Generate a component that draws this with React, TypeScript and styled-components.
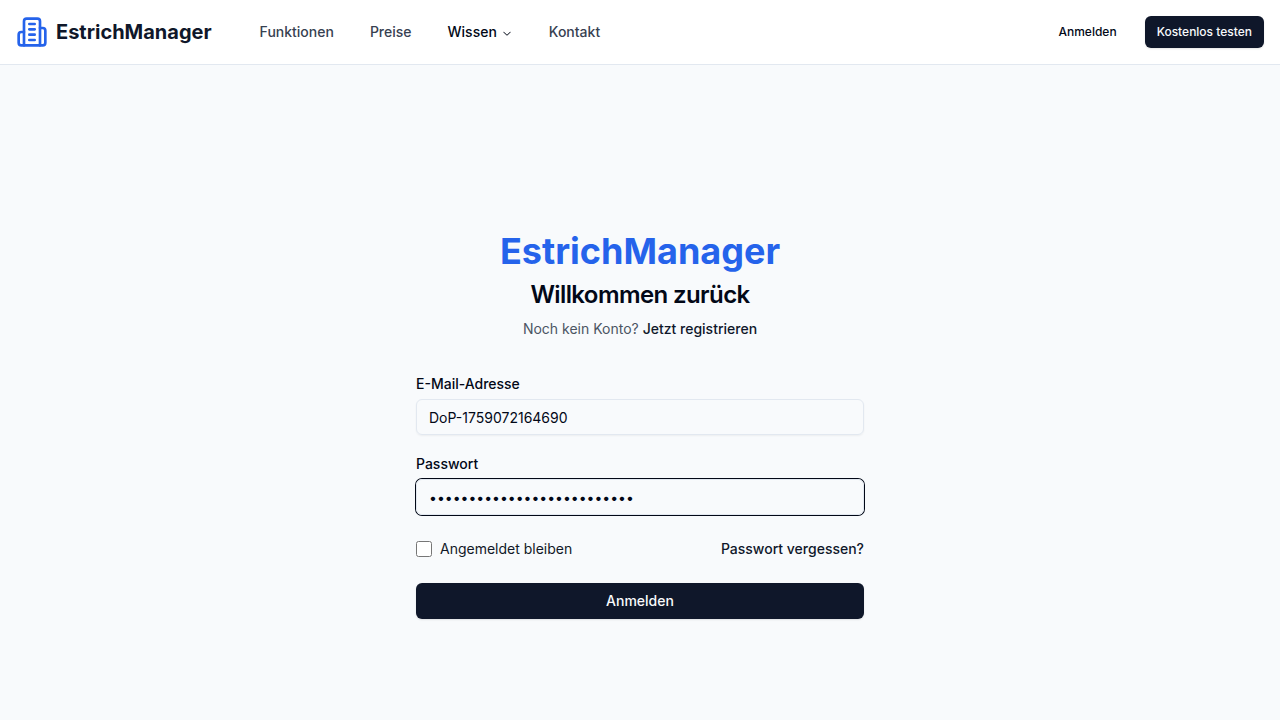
import React from 'react';
import styled, { createGlobalStyle, css } from 'styled-components';

const GlobalStyle = createGlobalStyle`
  *, *::before, *::after { box-sizing: border-box; }
  body {
    margin: 0;
    background: #f8fafc;
    color: #020817;
    font-family: Inter, "Liberation Sans", sans-serif;
    font-size: 16px;
    line-height: 24px;
    -webkit-font-smoothing: antialiased;
  }
  a { color: inherit; text-decoration: none; }
  button, input { font: inherit; color: inherit; }
  h1, h2, p { margin: 0; }
`;

const Page = styled.div`
  display: flex;
  flex-direction: column;
  min-height: 100vh;
`;

const Header = styled.header`
  background: #ffffff;
  border-bottom: 1px solid #e2e8f0;
`;

const HeaderInner = styled.div`
  display: flex;
  align-items: center;
  justify-content: space-between;
  max-width: 1400px;
  height: 64px;
  margin: 0 auto;
  padding: 0 16px;
`;

const HeaderLeft = styled.div`
  display: flex;
  align-items: center;
  gap: 32px;
`;

const Logo = styled.a`
  display: flex;
  align-items: center;
  gap: 8px;
  color: #0f172a;
  font-size: 20px;
  font-weight: 700;
  line-height: 28px;

  svg { color: #2563eb; }
`;

const Nav = styled.nav`
  display: flex;
  align-items: center;
  gap: 4px;
`;

const navItem = css`
  display: inline-flex;
  align-items: center;
  gap: 4px;
  height: 36px;
  padding: 0 16px;
  border: 0;
  border-radius: 6px;
  background: transparent;
  font-size: 14px;
  font-weight: 500;
  line-height: 20px;
`;

const NavLink = styled.a`
  ${navItem}
  color: #374151;
`;

const NavTrigger = styled.button`
  ${navItem}
  color: #020817;
  cursor: pointer;

  svg { margin-top: 2px; }
`;

const HeaderActions = styled.div`
  display: flex;
  align-items: center;
  gap: 16px;
`;

const ActionLink = styled.a<{ $filled?: boolean }>`
  display: inline-flex;
  align-items: center;
  justify-content: center;
  height: 32px;
  padding: 0 12px;
  border-radius: 6px;
  font-size: 12px;
  font-weight: 500;
  line-height: 16px;
  ${({ $filled }) =>
    $filled &&
    css`
      background: #0f172a;
      color: #f8fafc;
      box-shadow: 0 1px 2px rgba(0, 0, 0, 0.1);
    `}
`;

const Main = styled.main`
  display: flex;
  flex: 1;
  align-items: center;
  justify-content: center;
  padding: 113px 16px 48px;
`;

const Panel = styled.div`
  display: flex;
  flex-direction: column;
  gap: 32px;
  width: 100%;
  max-width: 448px;
`;

const Intro = styled.div`
  display: flex;
  flex-direction: column;
  gap: 8px;
  text-align: center;
`;

const Brand = styled.h1`
  color: #2563eb;
  font-size: 36px;
  font-weight: 700;
  line-height: 40px;
`;

const Welcome = styled.h2`
  font-size: 24px;
  font-weight: 600;
  line-height: 32px;
  letter-spacing: -0.025em;
`;

const Hint = styled.p`
  color: #4b5563;
  font-size: 14px;
  line-height: 20px;
`;

const TextLink = styled.a`
  color: #0f172a;
  font-size: 14px;
  font-weight: 500;
  line-height: 20px;
`;

const Form = styled.form`
  display: flex;
  flex-direction: column;
  gap: 24px;
`;

const Fields = styled.div`
  display: flex;
  flex-direction: column;
  gap: 16px;
`;

const Field = styled.div`
  display: flex;
  flex-direction: column;
  gap: 2px;
`;

const Label = styled.label`
  font-size: 14px;
  font-weight: 500;
  line-height: 26px;
`;

const Input = styled.input`
  width: 100%;
  height: 36px;
  padding: 4px 12px;
  border: 1px solid #e2e8f0;
  border-radius: 6px;
  outline: none;
  background: transparent;
  box-shadow: 0 1px 2px rgba(0, 0, 0, 0.05);
  font-size: 14px;
  line-height: 20px;

  &:focus { box-shadow: 0 0 0 1px #020817; }
`;

const Options = styled.div`
  display: flex;
  align-items: center;
  justify-content: space-between;
`;

const Remember = styled.label`
  display: flex;
  align-items: center;
  gap: 8px;
  color: #111827;
  font-size: 14px;
  line-height: 20px;
`;

const Checkbox = styled.input`
  width: 16px;
  height: 16px;
  margin: 0;
`;

const Submit = styled.button`
  height: 36px;
  border: 0;
  border-radius: 6px;
  background: #0f172a;
  color: #f8fafc;
  box-shadow: 0 1px 2px rgba(0, 0, 0, 0.1);
  font-size: 14px;
  font-weight: 500;
  line-height: 20px;
  cursor: pointer;
`;

const BuildingIcon = () => (
  <svg width="32" height="32" viewBox="0 0 24 24" fill="none" stroke="currentColor" strokeWidth="2" strokeLinecap="round" strokeLinejoin="round" aria-hidden="true">
    <path d="M6 22V4a2 2 0 0 1 2-2h8a2 2 0 0 1 2 2v18Z" />
    <path d="M6 12H4a2 2 0 0 0-2 2v6a2 2 0 0 0 2 2h2" />
    <path d="M18 9h2a2 2 0 0 1 2 2v9a2 2 0 0 1-2 2h-2" />
    <path d="M10 6h4" />
    <path d="M10 10h4" />
    <path d="M10 14h4" />
    <path d="M10 18h4" />
  </svg>
);

const ChevronIcon = () => (
  <svg width="12" height="12" viewBox="0 0 15 15" fill="none" aria-hidden="true">
    <path
      d="M3.13523 6.15803C3.3241 5.95657 3.64052 5.94637 3.84197 6.13523L7.5 9.56464L11.158 6.13523C11.3595 5.94637 11.6759 5.95657 11.8648 6.15803C12.0536 6.35949 12.0434 6.67591 11.842 6.86477L7.84197 10.6148C7.64964 10.7951 7.35036 10.7951 7.15803 10.6148L3.15803 6.86477C2.95657 6.67591 2.94637 6.35949 3.13523 6.15803Z"
      fill="currentColor"
      fillRule="evenodd"
      clipRule="evenodd"
    />
  </svg>
);

export default function App() {
  return (
    <Page>
      <GlobalStyle />
      <Header>
        <HeaderInner>
          <HeaderLeft>
            <Logo href="#">
              <BuildingIcon />
              EstrichManager
            </Logo>
            <Nav>
              <NavLink href="#funktionen">Funktionen</NavLink>
              <NavLink href="#preise">Preise</NavLink>
              <NavTrigger type="button" aria-expanded="false">
                Wissen
                <ChevronIcon />
              </NavTrigger>
              <NavLink href="#kontakt">Kontakt</NavLink>
            </Nav>
          </HeaderLeft>
          <HeaderActions>
            <ActionLink href="#anmelden">Anmelden</ActionLink>
            <ActionLink href="#testen" $filled>Kostenlos testen</ActionLink>
          </HeaderActions>
        </HeaderInner>
      </Header>
      <Main>
        <Panel>
          <Intro>
            <Brand>EstrichManager</Brand>
            <Welcome>Willkommen zurück</Welcome>
            <Hint>
              Noch kein Konto? <TextLink href="#registrieren">Jetzt registrieren</TextLink>
            </Hint>
          </Intro>
          <Form onSubmit={(event: React.FormEvent) => event.preventDefault()}>
            <Fields>
              <Field>
                <Label htmlFor="email">E-Mail-Adresse</Label>
                <Input id="email" type="text" autoComplete="email" defaultValue="DoP-1759072164690" />
              </Field>
              <Field>
                <Label htmlFor="password">Passwort</Label>
                <Input id="password" type="password" autoFocus defaultValue="abcdefghijklmnopqrstuvwxyz" />
              </Field>
            </Fields>
            <Options>
              <Remember>
                <Checkbox type="checkbox" />
                Angemeldet bleiben
              </Remember>
              <TextLink href="#passwort">Passwort vergessen?</TextLink>
            </Options>
            <Submit type="submit">Anmelden</Submit>
          </Form>
        </Panel>
      </Main>
    </Page>
  );
}
